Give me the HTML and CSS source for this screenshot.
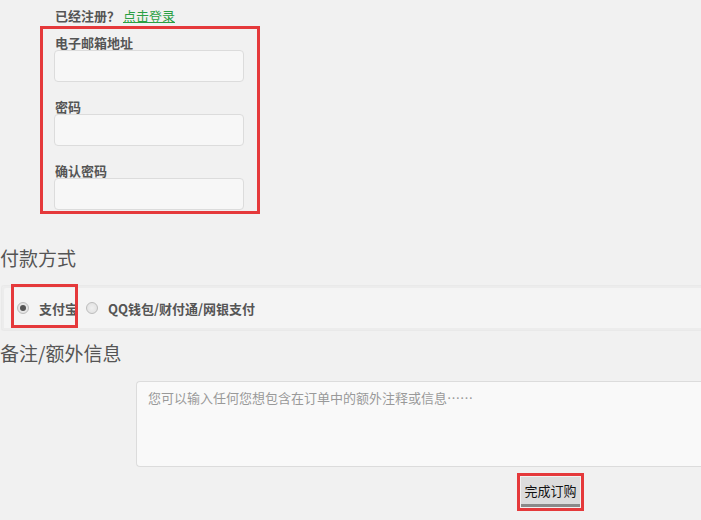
FILE: index.html
```html
<!DOCTYPE html>
<html lang="zh-CN">
<head>
  <meta charset="UTF-8">
  <title>结算</title>
  <meta name="viewport" content="width=device-width, initial-scale=1">
  <link rel="stylesheet" href="styles.css">
</head>
<body>
  <p class="login-tip">已经注册？ <a href="#">点击登录</a></p>

  <div class="account-box">
    <label class="field-label" for="email">电子邮箱地址</label>
    <input class="field-input" type="text" id="email">
    <label class="field-label" for="pass">密码</label>
    <input class="field-input" type="password" id="pass">
    <label class="field-label" for="pass2">确认密码</label>
    <input class="field-input last" type="password" id="pass2">
  </div>

  <h3 class="section-title">付款方式</h3>
  <div class="pay-bar">
    <label class="pay-option"><input type="radio" name="pay" checked> 支付宝</label>
    <label class="pay-option"><input type="radio" name="pay"> QQ钱包/财付通/网银支付</label>
    <span class="mark"></span>
  </div>

  <h3 class="section-title notes-title">备注/额外信息</h3>
  <textarea class="notes" placeholder="您可以输入任何您想包含在订单中的额外注释或信息……"></textarea>

  <div class="submit-wrap">
    <button class="submit-btn">完成订购</button>
  </div>
</body>
</html>
```

FILE: styles.css
```css
html {
  overflow: hidden;
}

body, input, button, textarea {
  font-family: "Noto Sans CJK SC", "Noto Sans", sans-serif;
}

body {
  margin: 0;
  background: #f1f1f1;
  color: #555;
  font-size: 13px;
}

.login-tip {
  margin: 6px 0 0;
  padding-left: 55px;
  line-height: 20px;
  font-weight: bold;
}

.login-tip a {
  color: #2aa043;
  font-weight: normal;
}

.account-box {
  width: 220px;
  box-sizing: border-box;
  margin-left: 40px;
  border: 3px solid #e5393b;
  padding: 7px 13px 1px 11px;
}

.field-label {
  display: block;
  line-height: 14px;
  padding-left: 1px;
  font-weight: bold;
}

.field-input {
  display: block;
  width: 190px;
  height: 32px;
  box-sizing: border-box;
  margin: 0 0 18px;
  border: 1px solid #dcdcdc;
  border-radius: 4px;
  background: #f7f7f7;
}

.field-input.last {
  margin-bottom: 0;
}

.section-title {
  margin: 32px 0 0;
  font-size: 19px;
  font-weight: normal;
  line-height: 24px;
  color: #555;
}

/* bar runs on past the right edge of the window */
.pay-bar {
  position: relative;
  display: flex;
  align-items: center;
  gap: 8px;
  margin: 15px 0 0 1px;
  height: 46px;
  box-sizing: border-box;
  padding-left: 15px;
  border: 1px solid #e9e9e9;
  border-right: none;
  border-radius: 3px 0 0 3px;
  background: #f4f4f4;
  box-shadow: inset 2px 2px 0 #ececec, inset 0 -2px 0 #ececec;
}

.pay-option {
  display: flex;
  align-items: center;
  gap: 10px;
  font-weight: bold;
}

.pay-option input {
  appearance: none;
  width: 12px;
  height: 12px;
  margin: 0;
  border: 1px solid #bdbdbd;
  border-radius: 50%;
  background: radial-gradient(circle, #f0f0f0 0%, #dedede 100%);
  position: relative;
}

.pay-option input:checked::after {
  content: "";
  position: absolute;
  left: 2px;
  top: 2px;
  width: 6px;
  height: 6px;
  border-radius: 50%;
  background: #555;
}

/* annotation drawn over the first option */
.mark {
  position: absolute;
  left: 9px;
  top: -2px;
  width: 67px;
  height: 44px;
  box-sizing: border-box;
  border: 3px solid #e5393b;
}

.notes-title {
  margin-top: 10px;
}

.notes {
  display: block;
  width: calc(100% - 136px);
  height: 86px;
  box-sizing: border-box;
  margin: 16px 0 0 136px;
  padding: 6px 11px;
  border: 1px solid #dcdcdc;
  border-right: none;
  border-radius: 4px 0 0 4px;
  background: #f9f9f9;
  font-size: 13px;
  resize: none;
}

.notes::placeholder {
  color: #999;
}

.submit-wrap {
  display: inline-block;
  margin: 6px 0 0 517px;
  border: 3px solid #e5393b;
  padding: 1px;
}

.submit-btn {
  display: block;
  width: 59px;
  height: 30px;
  padding: 0;
  border: none;
  border-bottom: 3px solid #8a8a8a;
  background: #dcdcdc;
  color: #111;
  font-size: 13px;
}
```
